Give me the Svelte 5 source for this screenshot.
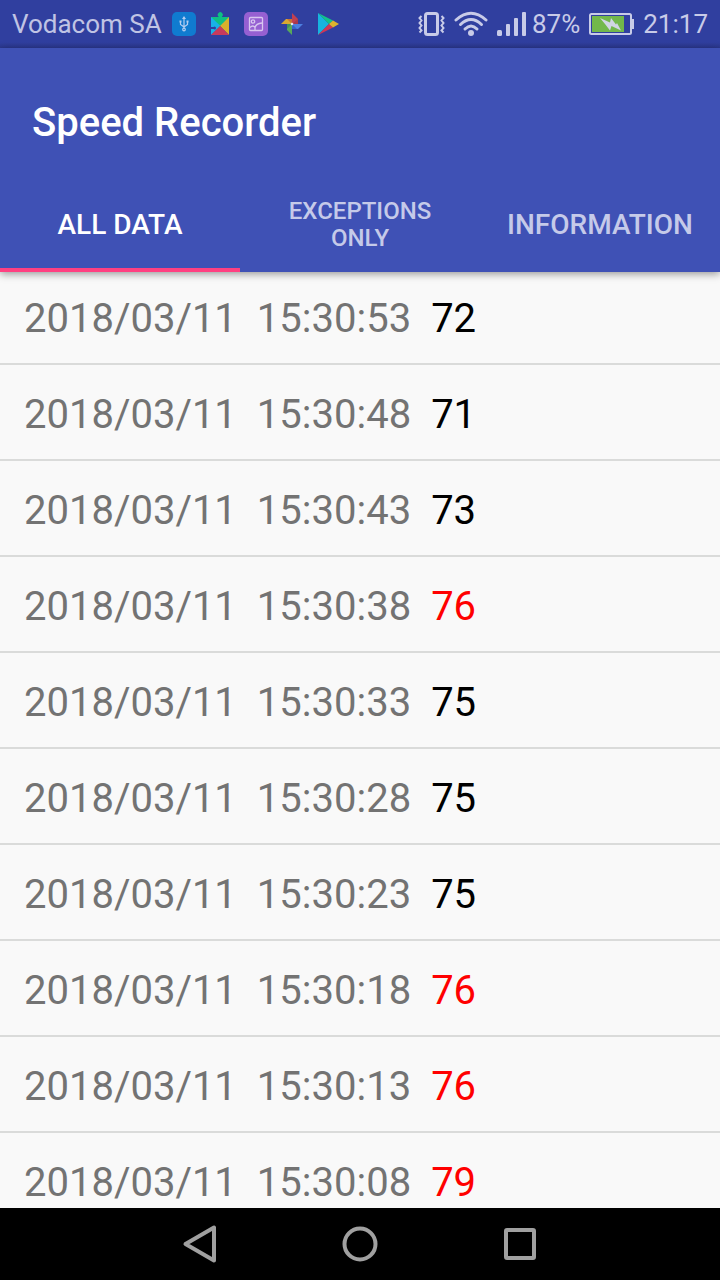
<script>
  const tabs = [
    { id: 'all', label: 'All data' },
    { id: 'exceptions', label: 'Exceptions only', small: true },
    { id: 'info', label: 'Information' }
  ];
  let active = $state('all');

  const limit = 75;
  const records = [
    { time: '15:30:53', speed: 72 },
    { time: '15:30:48', speed: 71 },
    { time: '15:30:43', speed: 73 },
    { time: '15:30:38', speed: 76 },
    { time: '15:30:33', speed: 75 },
    { time: '15:30:28', speed: 75 },
    { time: '15:30:23', speed: 75 },
    { time: '15:30:18', speed: 76 },
    { time: '15:30:13', speed: 76 },
    { time: '15:30:08', speed: 79 }
  ].map((r) => ({ date: '2018/03/11', ...r }));
  const shown = $derived(
    active === 'all' ? records : active === 'exceptions' ? records.filter((r) => r.speed > limit) : []
  );
</script>

<div class="screen">
  <div class="status">
    <span class="carrier">Vodacom SA</span>
    <div class="apps">
      <svg width="24" height="24" viewBox="0 0 24 24" aria-hidden="true">
        <rect width="24" height="24" rx="5" fill="#107bd0" />
        <g fill="none" stroke="#b4cdf0" stroke-width="1.2">
          <path d="M12 6v11M8.500 10v2.500l3.500 2.500 3.500-2.500V10" />
          <circle cx="12" cy="17.500" r="1.300" />
        </g>
        <path d="M12 4l2 3h-4zM7.500 8.500h2v2h-2zM14.500 8.500h2v2h-2z" fill="#b4cdf0" />
      </svg>
      <svg width="24" height="24" viewBox="0 0 24 24" aria-hidden="true">
        <path d="M3 5h18v1l-9 8.500L3 6z" fill="#0fbf83" />
        <path d="M10.500 6V4.500a2.500 2.500 0 1 1 3.500 0V6z" fill="#0fbf83" />
        <path d="M3 5l9.500 9L3 23v-6h2.500l1 .5a1.500 1.500 0 1 0 0-3l-1 .5H3z" fill="#18b2e8" />
        <path d="M21 5v18l-9-9z" fill="#d8b02c" />
        <path d="M3 23h18l-9-9z" fill="#c83a5c" />
      </svg>
      <svg width="24" height="24" viewBox="0 0 24 24" aria-hidden="true">
        <rect width="24" height="24" rx="5" fill="#9660d2" />
        <g fill="none" stroke="#d8c6f0" stroke-width="1.3">
          <rect x="5.500" y="5.500" width="13" height="13" rx="1" />
          <circle cx="9" cy="9.500" r="1.700" />
          <path d="M6 15.500q3-3 5 0v3M11 15.500q1-4 7-4.500" />
        </g>
      </svg>
      <svg width="24" height="24" viewBox="0 0 24 24" aria-hidden="true">
        <path d="M12 1l6 6v5h-6z" fill="#c04050" />
        <path d="M12 7v5H1l5-5z" fill="#d9a832" />
        <path d="M12 12v11l-5-5v-6z" fill="#58a85a" />
        <path d="M12 12h11l-5 5h-6z" fill="#4d7fe0" />
        <path d="M12 12l6-5v5z" fill="#a83850" />
        <path d="M12 12L7 7h5z" fill="#c87038" />
        <path d="M12 12l-5 5v-5z" fill="#3f9060" />
        <path d="M12 12l5 5h-5z" fill="#3465cc" />
        <circle cx="12" cy="12" r="1.300" fill="#dfe2f3" />
      </svg>
      <svg width="24" height="24" viewBox="0 0 24 24" aria-hidden="true">
        <path d="M2 1l11 11L2 23z" fill="#17b4df" />
        <path d="M2 1l15 7.500L13 12z" fill="#12c28a" />
        <path d="M2 23l15-7.500L13 12z" fill="#cf3754" />
        <path d="M17 8.500l6 3.500-6 3.500L13 12z" fill="#dcb32e" />
      </svg>
    </div>
    <div class="system">
      <svg width="28" height="24" viewBox="0 0 28 24" aria-hidden="true">
        <rect x="8.500" y="1.500" width="12" height="21" rx="2" fill="none" stroke="#c8cbe8" stroke-width="3" />
        <path d="M4.500 4l-2 2 2 2.500-2 2.500 2 2.500-2 2.500 2 2.500-2 2M24.500 4l2 2-2 2.500 2 2.500-2 2.500 2 2.500-2 2.500 2 2" fill="none" stroke="#c8cbe8" stroke-width="2" />
      </svg>
      <svg width="34" height="26" viewBox="0 0 34 26" aria-hidden="true">
        <g fill="none" stroke="#c8cbe8" stroke-width="3" stroke-linecap="round">
          <path d="M2 9Q17-4.500 32 9" />
          <path d="M6.500 13.500Q17 3.500 27.500 13.500" />
          <path d="M11 18Q17 12 23 18" />
        </g>
        <circle cx="17" cy="22" r="3" fill="#c8cbe8" />
      </svg>
      <svg width="30" height="24" viewBox="0 0 30 24" aria-hidden="true">
        <g fill="#c8cbe8">
          <rect x="0" y="18" width="5" height="6" rx="1.500" />
          <rect x="9" y="12" width="4" height="12" rx="1" />
          <rect x="17" y="6" width="4" height="18" rx="1" />
          <rect x="25" y="0" width="4" height="24" rx="1" />
        </g>
      </svg>
      <span class="charge">87%</span>
      <svg width="45" height="24" viewBox="0 0 45 24" aria-hidden="true">
        <rect x="1" y="2" width="41" height="20" rx="1.500" fill="none" stroke="#c8cbe8" stroke-width="2" />
        <rect x="42" y="7" width="3" height="10" fill="#c8cbe8" />
        <rect x="3" y="4" width="32" height="16" fill="#72b84b" />
        <path d="M11 6l10 4.500L22 6l5 6.500 1-1.500 4 7.500-9.500-4.500-1.500 4.500-5-6.500z" fill="#d0d6e4" />
      </svg>
      <span>21:17</span>
    </div>
  </div>

  <header>
    <h1>Speed Recorder</h1>
    <nav role="tablist" aria-label="Data views">
      {#each tabs as tab (tab.id)}
        <button
          role="tab"
          class:small={tab.small}
          class:active={active === tab.id}
          aria-selected={active === tab.id}
          onclick={() => (active = tab.id)}><span>{tab.label}</span></button>
      {/each}
    </nav>
  </header>

  <main>
    <table aria-label="Recorded speeds">
      <tbody>
        {#each shown as row (row.time)}
          <tr>
            <td>{row.date}</td>
            <td>{row.time}</td>
            <td class="speed" class:over={row.speed > limit}>{row.speed}</td>
          </tr>
        {/each}
      </tbody>
    </table>
  </main>

  <footer>
    <button aria-label="Back">
      <svg width="40" height="40" viewBox="0 0 40 40" aria-hidden="true">
        <path d="M34 3.500v33L5.500 20z" />
      </svg>
    </button>
    <button aria-label="Home">
      <svg width="40" height="40" viewBox="0 0 40 40" aria-hidden="true">
        <circle cx="20" cy="20" r="15.500" />
      </svg>
    </button>
    <button aria-label="Recent apps">
      <svg width="40" height="40" viewBox="0 0 40 40" aria-hidden="true">
        <rect x="6" y="6" width="28" height="28" rx="1" />
      </svg>
    </button>
  </footer>
</div>

<style>
  :global(body) {
    margin: 0;
  }
  .screen {
    display: flex;
    flex-direction: column;
    height: 100vh;
    overflow: hidden;
    background: #f9f9f9;
    font-family: Roboto, sans-serif;
  }
  .status {
    display: flex;
    align-items: center;
    flex: none;
    height: 48px;
    padding: 0 12px;
    box-sizing: border-box;
    background: linear-gradient(#303f9f 88%, #2b388f);
    color: #c0c4e4;
    font-size: 26px;
    line-height: 32px;
    white-space: nowrap;
  }
  .status svg {
    display: block;
    flex: none;
  }
  .apps {
    display: flex;
    gap: 12px;
    margin-left: 10px;
  }
  .system {
    display: flex;
    align-items: center;
    margin-left: auto;
    gap: 9px;
    color: #c8cbe8;
  }
  .charge {
    margin-left: -4px;
  }
  header {
    position: relative;
    flex: none;
    background: #3f51b5;
    box-shadow: 0 2px 8px rgba(0, 0, 0, 0.4);
  }
  h1 {
    margin: 0;
    padding: 52px 32px 30px;
    color: #fff;
    font-size: 40px;
    font-weight: 500;
    line-height: 46px;
  }
  nav {
    display: grid;
    grid-template-columns: repeat(3, 1fr);
  }
  nav button {
    display: flex;
    align-items: center;
    justify-content: center;
    height: 96px;
    padding: 6px 24px 0;
    border: 0;
    border-bottom: 4px solid transparent;
    background: none;
    color: #c5cae9;
    font: 500 28px/34px Roboto, sans-serif;
    text-transform: uppercase;
  }
  nav button.small {
    font-size: 24px;
    line-height: 27px;
  }
  nav button.active {
    border-bottom-color: #ff4081;
    color: #fff;
  }
  main {
    flex: 1;
    min-height: 0;
    overflow: hidden;
  }
  table {
    width: 100%;
    margin-top: -3px;
    border-collapse: collapse;
  }
  table,
  tbody {
    display: block;
  }
  tr {
    display: flex;
    align-items: center;
    gap: 20px;
    height: 96px;
    padding: 6px 24px 0;
    box-sizing: border-box;
    border-bottom: 2px solid #dadbda;
  }
  td {
    padding: 0;
    color: #737373;
    font-size: 40px;
    line-height: 48px;
  }
  .speed {
    color: #000;
  }
  .speed.over {
    color: #f00;
  }
  footer {
    display: flex;
    justify-content: center;
    align-items: center;
    flex: none;
    gap: 80px;
    height: 72px;
    background: #000;
  }
  footer button {
    display: flex;
    justify-content: center;
    width: 80px;
    padding: 0;
    border: 0;
    background: none;
  }
  footer svg {
    fill: none;
    stroke: #a0a0a0;
    stroke-width: 4;
    stroke-linejoin: round;
  }
</style>
